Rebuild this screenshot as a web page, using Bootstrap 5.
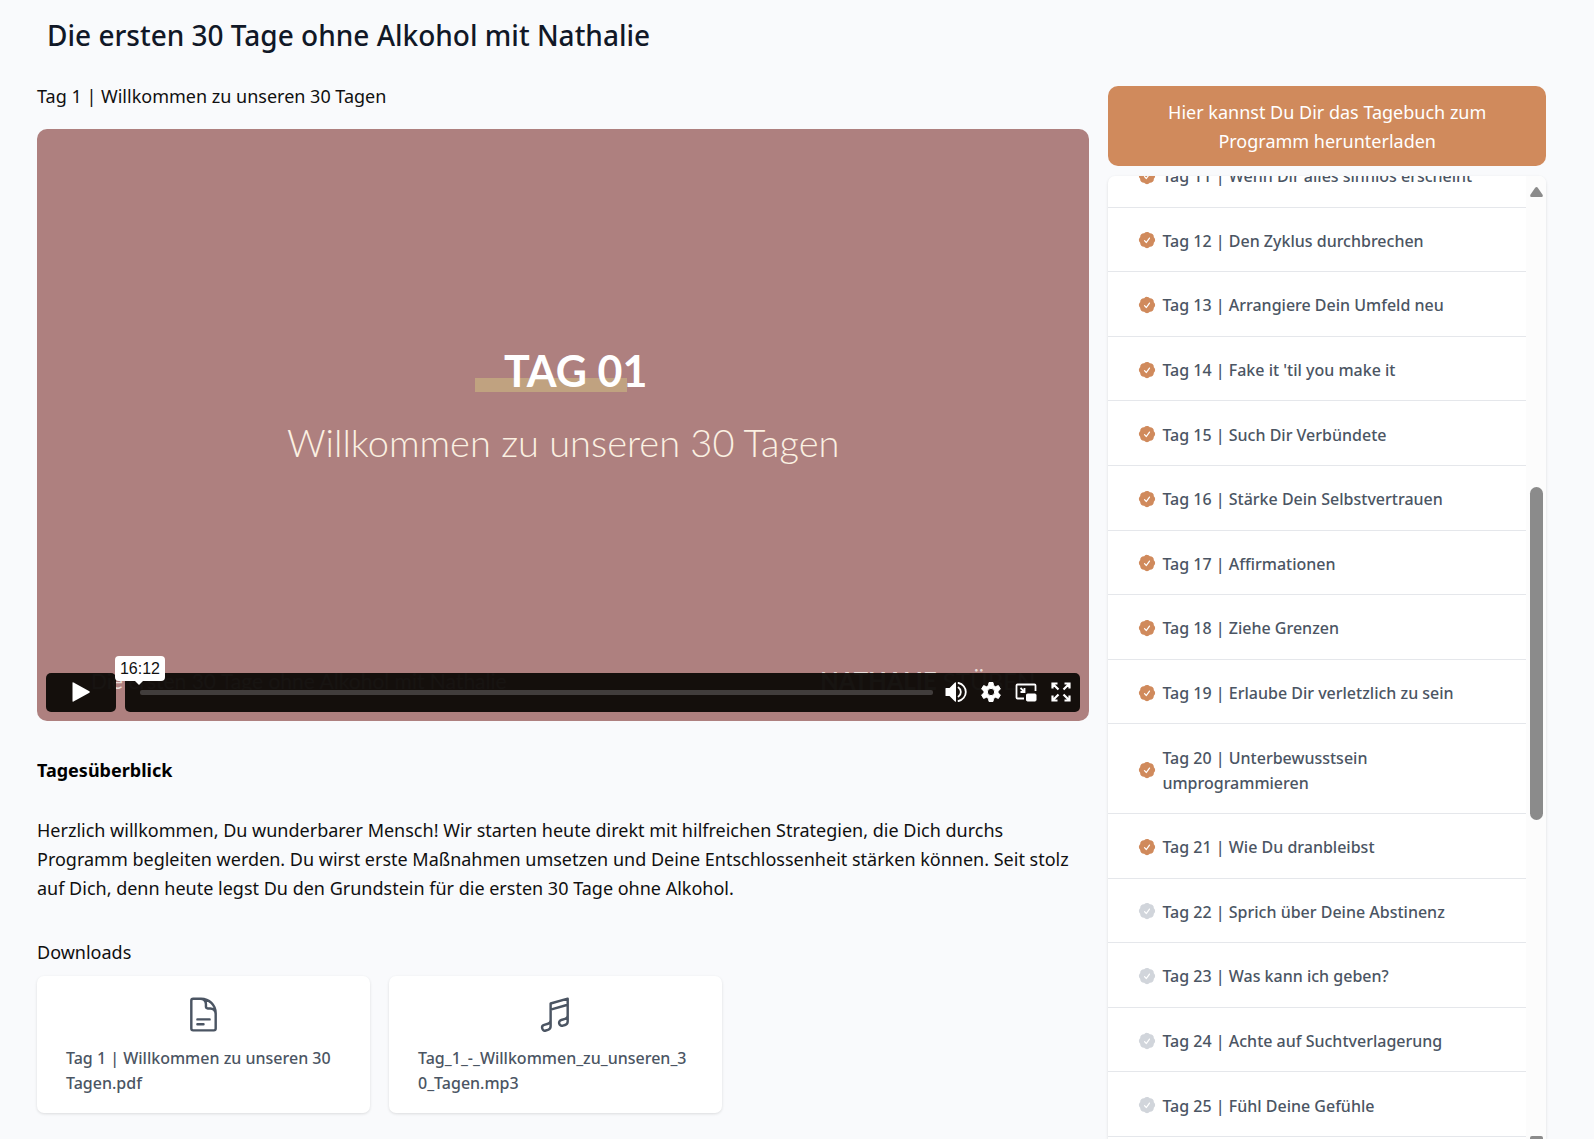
<!DOCTYPE html>
<html lang="de">
<head>
<meta charset="utf-8">
<meta name="viewport" content="width=device-width, initial-scale=1">
<title>Die ersten 30 Tage ohne Alkohol mit Nathalie</title>
<link href="https://cdn.jsdelivr.net/npm/bootstrap@5.3.0/dist/css/bootstrap.min.css" rel="stylesheet">
<style>
  body { background: #f9fafc; color: #101010; font-family: "Noto Sans", sans-serif; font-size: 18px; line-height: 29px; overflow: hidden; }
  .page { padding: 15px 48px 0 37px; }
  .course-title { font-size: 28px; line-height: 40px; font-weight: 500; color: #111827; margin: 0 0 27px 10px; }
  .main-part { min-width: 0; }
  .side-part { flex: 0 0 29%; padding-top: 4px; }
  .columns { gap: 19px; }
  .lesson-title { font-size: 18px; line-height: 29px; margin-bottom: 18px; }

  /* video */
  .player { aspect-ratio: 16 / 9; padding-bottom: 39px; background: #ae807f; border-radius: 10px; overflow: hidden; color: #fffaf2; font-family: Lato, sans-serif; }
  .slide-head { font-size: 43px; line-height: 52px; font-weight: 700; color: #fff; padding: 0 4px 0 29px; background: linear-gradient(#c0a280, #c0a280) 0 33px / 152px 14px no-repeat; }
  .slide-sub { font-size: 38px; line-height: 46px; font-weight: 300; color: #fbf0e2; margin-top: 22px; }
  .slide-foot { left: 54px; right: 54px; bottom: 25px; line-height: 30px; color: #e8dcd8; }
  .foot-course { font-size: 21px; }
  .foot-name { font-size: 24px; }
  .controls { left: 9px; right: 9px; bottom: 9px; gap: 9px; height: 39px; }
  .play-btn, .control-bar { background: rgba(12, 8, 6, .95); border-radius: 5px; }
  .play-btn { width: 70px; }
  .control-bar { padding: 0 7px 0 15px; }
  .icon-btn { width: 24px; height: 24px; margin-left: 11px; }
  .track { height: 5px; border-radius: 2px; background: #413d3c; }
  .time-tip { left: 69px; bottom: 31px; width: 50px; font: 16px/25px "Liberation Sans", sans-serif; color: #111; border-radius: 4px; }
  .time-tip::after { content: ""; position: absolute; left: 20px; top: 25px; border: 4px solid transparent; border-top-color: #fff; border-bottom: 0; }

  .overview { padding-top: 35px; }
  .overview h2 { font-size: 18px; line-height: 29px; font-weight: 700; color: #000; margin-bottom: 31px; }
  .overview p { margin-bottom: 35px; }
  .downloads-title { font-size: 18px; line-height: 29px; font-weight: 400; margin-bottom: 9px; }
  .file-card { flex: 0 1 333px; padding: 19px 29px 17px; background: #fff; border-radius: 7px; box-shadow: 0 1px 3px rgba(0, 0, 0, .12); color: #4b5563; font-size: 16px; line-height: 25px; font-weight: 500; }
  .file-card svg { margin-bottom: 12px; }
  .file-name { word-break: break-all; }

  /* lesson list */
  .diary-btn { background: #d08a5c; color: #fff; font-size: 18px; line-height: 29px; padding: 12px 38px 10px; border: 0; border-radius: 10px; }
  .diary-btn:hover { background: #c57d4e; color: #fff; }
  .side-part, .main-part { height: calc(100vh - 82px); }
  .lesson-box { margin-top: 10px; background: #fff; border-radius: 7px 7px 0 0; box-shadow: 0 1px 3px rgba(0, 0, 0, .12); min-height: 0; }
  .lesson-list { margin-top: -33px; margin-bottom: 2px; }
  .lesson { flex: 1 0 auto; display: flex; align-items: center; gap: 5px; padding: 21px 29px 17px; border-bottom: 1px solid #e5e7eb; color: #4b5563; font-size: 16px; line-height: 25px; font-weight: 500; text-decoration: none; }
  .lesson svg { flex: none; color: #d08a5c; margin-bottom: 2px; }
  .lesson.open svg { color: #d1d5db; }
  .scroll-rail { width: 21px; background: #fcfcfc; padding-top: 11px; }
  .scroll-thumb { width: 13px; flex: 0 0 35%; background: #8b8b8b; border-radius: 7px; margin-top: 290px; }
  .scroll-end { width: 13px; height: 3px; background: #8b8b8b; border-radius: 2px 2px 0 0; }
</style>
<script src="https://cdn.jsdelivr.net/npm/bootstrap@5.3.0/dist/js/bootstrap.bundle.min.js"></script>
</head>
<body>
<svg class="d-none" aria-hidden="true">
  <symbol id="badge-check" viewBox="0 0 24 24"><path fill="currentColor" fill-rule="evenodd" clip-rule="evenodd" d="M8.603 3.799A4.49 4.49 0 0112 2.25c1.357 0 2.573.6 3.397 1.549a4.49 4.49 0 013.498 1.307 4.491 4.491 0 011.307 3.497A4.49 4.49 0 0121.75 12a4.49 4.49 0 01-1.549 3.397 4.491 4.491 0 01-1.307 3.497 4.491 4.491 0 01-3.497 1.307A4.49 4.49 0 0112 21.75a4.49 4.49 0 01-3.397-1.549 4.49 4.49 0 01-3.498-1.306 4.491 4.491 0 01-1.307-3.498A4.49 4.49 0 012.25 12c0-1.357.6-2.573 1.549-3.397a4.49 4.49 0 011.307-3.497 4.49 4.49 0 013.497-1.307zm7.007 6.387a.75.75 0 10-1.22-.872l-3.236 4.53L9.53 12.22a.75.75 0 00-1.06 1.06l2.25 2.25a.75.75 0 001.14-.094l3.75-5.25z"/></symbol>
</svg>
<div class="page">
  <h1 class="course-title">Die ersten 30 Tage ohne Alkohol mit Nathalie</h1>
  <div class="columns d-flex">
    <main class="main-part flex-grow-1">
      <h2 class="lesson-title fw-normal">Tag 1 | Willkommen zu unseren 30 Tagen</h2>
      <div class="player position-relative d-flex flex-column align-items-center justify-content-center">
        <div class="slide-head">TAG 01</div>
        <div class="slide-sub">Willkommen zu unseren 30 Tagen</div>
        <div class="slide-foot position-absolute d-flex justify-content-between">
          <span class="foot-course">Die ersten 30 Tage ohne Alkohol mit Nathalie</span>
          <span class="foot-name"><b>NATHALIE</b> STÜBEN</span>
        </div>
        <div class="controls position-absolute d-flex">
          <button type="button" class="play-btn border-0 p-0 d-flex align-items-center justify-content-center" aria-label="Abspielen">
            <svg width="20" height="20" viewBox="0 0 20 20" fill="#fff"><path d="M1.500 .8Q1.500 0 2.500 .5L18.400 9.300Q19.400 10 18.400 10.700L2.500 19.500Q1.500 20 1.500 19.200Z"/></svg>
          </button>
          <div class="control-bar flex-grow-1 d-flex align-items-center">
            <div class="track flex-grow-1"></div>
            <button type="button" class="icon-btn btn p-0 border-0 d-flex" aria-label="Lautstärke">
              <svg width="24" height="24" viewBox="0 0 24 24" fill="none" stroke="#fff" stroke-width="1.800" stroke-linecap="round"><path fill="#fff" stroke="none" d="M1.500 8.500Q1.500 8 2 8H5.500L11 2.400Q12 1.700 12 3V21Q12 22.300 11 21.600L5.500 16H2Q1.500 16 1.500 15.500Z"/><path d="M14.500 7.500a5.500 5.500 0 0 1 0 9M14.500 3a9.200 9.200 0 0 1 0 18"/></svg>
            </button>
            <button type="button" class="icon-btn btn p-0 border-0 d-flex" aria-label="Einstellungen">
              <svg width="24" height="24" viewBox="0 0 24 24"><path fill="#fff" fill-rule="evenodd" stroke="#fff" stroke-width="1" stroke-linejoin="round" d="M10 2.500h4l.5 3 2 1.200 2.900-1.100 2 3.500-2.400 1.900v2l2.400 1.900-2 3.500-2.900-1.100-2 1.200-.5 3h-4l-.5-3-2-1.200-2.900 1.100-2-3.500L5 13v-2L2.600 9.100l2-3.500 2.900 1.100 2-1.200zM12 8.300a3.700 3.700 0 1 0 0 7.400a3.700 3.700 0 0 0 0-7.400z"/></svg>
            </button>
            <button type="button" class="icon-btn btn p-0 border-0 d-flex" aria-label="Bild im Bild">
              <svg width="24" height="24" viewBox="0 0 24 24" fill="none" stroke="#fff" stroke-width="1.800"><path d="M10 18.500H3.500a1 1 0 0 1-1-1V5.500a1 1 0 0 1 1-1h17a1 1 0 0 1 1 1V11"/><path d="M6.500 8l3.200 3.200M10.500 8v4h-4"/><rect x="12.500" y="14" width="9.500" height="7" fill="#fff" stroke-width="1" rx="1"/></svg>
            </button>
            <button type="button" class="icon-btn btn p-0 border-0 d-flex" aria-label="Vollbild">
              <svg width="24" height="24" viewBox="0 0 24 24" fill="none" stroke="#fff" stroke-width="2.200"><path d="M3.500 8.500V3.500H8.500M3.500 3.500l6 6M15.500 3.500h5V8.500M20.500 3.500l-6 6M3.500 15.500v5H8.500M3.500 20.500l6-6M20.500 15.500v5H15.500M20.500 20.500l-6-6"/></svg>
            </button>
          </div>
        </div>
        <div class="controls position-absolute d-flex pe-none">
          <div class="time-tip position-absolute bg-white text-center">16:12</div>
        </div>
      </div>
      <section class="overview">
        <h2>Tagesüberblick</h2>
        <p>Herzlich willkommen, Du wunderbarer Mensch! Wir starten heute direkt mit hilfreichen Strategien, die Dich durchs Programm begleiten werden. Du wirst erste Maßnahmen umsetzen und Deine Entschlossenheit stärken können. Seit stolz auf Dich, denn heute legst Du den Grundstein für die ersten 30 Tage ohne Alkohol.</p>
      </section>
      <h3 class="downloads-title">Downloads</h3>
      <div class="columns d-flex">
        <a href="#" class="file-card text-decoration-none">
          <svg class="d-block mx-auto" width="39" height="39" viewBox="0 0 24 24" fill="none" stroke="currentColor" stroke-width="1.500" stroke-linecap="round" stroke-linejoin="round"><path d="M19.500 14.250v-2.625a3.375 3.375 0 00-3.375-3.375h-1.500A1.125 1.125 0 0113.500 7.125v-1.500a3.375 3.375 0 00-3.375-3.375H8.250m0 12.750h7.500m-7.500 3H12M10.500 2.250H5.625c-.621 0-1.125.504-1.125 1.125v17.250c0 .621.504 1.125 1.125 1.125h12.750c.621 0 1.125-.504 1.125-1.125V11.250a9 9 0 00-9-9z"/></svg>
          Tag 1 | Willkommen zu unseren 30 Tagen.pdf
        </a>
        <a href="#" class="file-card text-decoration-none">
          <svg class="d-block mx-auto" width="39" height="39" viewBox="0 0 24 24" fill="none" stroke="currentColor" stroke-width="1.500" stroke-linecap="round" stroke-linejoin="round"><path d="M9 9l10.500-3m0 6.553v3.750a2.250 2.250 0 01-1.632 2.163l-1.320.377a1.803 1.803 0 11-.99-3.467l2.310-.66a2.250 2.250 0 001.632-2.163zm0 0V2.250L9 5.250v10.303m0 0v3.750a2.250 2.250 0 01-1.632 2.163l-1.320.377a1.803 1.803 0 01-.99-3.467l2.310-.66A2.250 2.250 0 009 15.553z"/></svg>
          <span class="file-name">Tag_1_-_Willkommen_zu_unseren_30_Tagen.mp3</span>
        </a>
      </div>
    </main>
    <aside class="side-part d-flex flex-column">
      <a href="#" class="diary-btn btn">Hier kannst Du Dir das Tagebuch zum Programm herunterladen</a>
      <div class="lesson-box flex-grow-1 d-flex overflow-hidden">
        <nav class="lesson-list flex-grow-1 d-flex flex-column" aria-label="Lektionen">
          <a href="#" class="lesson"><svg width="20" height="20"><use href="#badge-check"/></svg><span>Tag 11 | Wenn Dir alles sinnlos erscheint</span></a>
          <a href="#" class="lesson"><svg width="20" height="20"><use href="#badge-check"/></svg><span>Tag 12 | Den Zyklus durchbrechen</span></a>
          <a href="#" class="lesson"><svg width="20" height="20"><use href="#badge-check"/></svg><span>Tag 13 | Arrangiere Dein Umfeld neu</span></a>
          <a href="#" class="lesson"><svg width="20" height="20"><use href="#badge-check"/></svg><span>Tag 14 | Fake it 'til you make it</span></a>
          <a href="#" class="lesson"><svg width="20" height="20"><use href="#badge-check"/></svg><span>Tag 15 | Such Dir Verbündete</span></a>
          <a href="#" class="lesson"><svg width="20" height="20"><use href="#badge-check"/></svg><span>Tag 16 | Stärke Dein Selbstvertrauen</span></a>
          <a href="#" class="lesson"><svg width="20" height="20"><use href="#badge-check"/></svg><span>Tag 17 | Affirmationen</span></a>
          <a href="#" class="lesson"><svg width="20" height="20"><use href="#badge-check"/></svg><span>Tag 18 | Ziehe Grenzen</span></a>
          <a href="#" class="lesson"><svg width="20" height="20"><use href="#badge-check"/></svg><span>Tag 19 | Erlaube Dir verletzlich zu sein</span></a>
          <a href="#" class="lesson"><svg width="20" height="20"><use href="#badge-check"/></svg><span>Tag 20 | Unterbewusstsein umprogrammieren</span></a>
          <a href="#" class="lesson"><svg width="20" height="20"><use href="#badge-check"/></svg><span>Tag 21 | Wie Du dranbleibst</span></a>
          <a href="#" class="lesson open"><svg width="20" height="20"><use href="#badge-check"/></svg><span>Tag 22 | Sprich über Deine Abstinenz</span></a>
          <a href="#" class="lesson open"><svg width="20" height="20"><use href="#badge-check"/></svg><span>Tag 23 | Was kann ich geben?</span></a>
          <a href="#" class="lesson open"><svg width="20" height="20"><use href="#badge-check"/></svg><span>Tag 24 | Achte auf Suchtverlagerung</span></a>
          <a href="#" class="lesson open"><svg width="20" height="20"><use href="#badge-check"/></svg><span>Tag 25 | Fühl Deine Gefühle</span></a>
        </nav>
        <div class="scroll-rail d-flex flex-column align-items-center" aria-hidden="true">
          <svg width="13" height="10" viewBox="0 0 13 10" class="flex-shrink-0"><path fill="#8b8b8b" d="M5.200 .8Q6.500-.6 7.800 .8L12.600 7.800Q13.400 10 11.500 10H1.500Q-.4 10 .4 7.800Z"/></svg>
          <div class="scroll-thumb"></div>
          <div class="scroll-end mt-auto"></div>
        </div>
      </div>
    </aside>
  </div>
</div>
</body>
</html>
